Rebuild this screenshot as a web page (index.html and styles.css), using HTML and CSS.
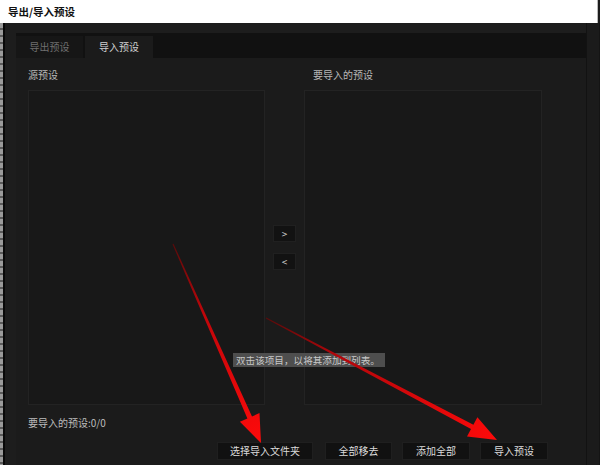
FILE: index.html
```html
<!DOCTYPE html>
<html>
<head>
<meta charset="utf-8">
<link rel="stylesheet" href="styles.css">
</head>
<body>
<div class="screen">
  <div class="titlebar">导出/导入预设</div>
  <div class="main">
    <div class="edge"></div>
    <div class="body">
      <div class="tabs">
        <div class="tab">导出预设</div>
        <div class="tab active">导入预设</div>
      </div>
      <div class="panel">
        <div class="lists">
          <div class="label">源预设</div>
          <div></div>
          <div class="label">要导入的预设</div>
          <div class="listbox"></div>
          <div class="movers">
            <div class="mbtn">&gt;</div>
            <div class="mbtn">&lt;</div>
          </div>
          <div class="listbox"></div>
        </div>
        <div class="count">要导入的预设:0/0</div>
        <div class="actions">
          <div class="btn wide">选择导入文件夹</div>
          <div class="btn narrow">全部移去</div>
          <div class="btn">添加全部</div>
          <div class="btn">导入预设</div>
        </div>
      </div>
    </div>
    <div class="redge"></div>
  </div>
  <div class="tooltip">双击该项目，以将其添加到列表。</div>
  <svg class="annot" width="600" height="465" viewBox="0 0 600 465">
    <defs>
      <linearGradient id="g1" gradientUnits="userSpaceOnUse" x1="173" y1="244" x2="261" y2="443">
        <stop offset="0" stop-color="#5a0a0a"/>
        <stop offset="0.35" stop-color="#c0060a"/>
        <stop offset="1" stop-color="#ff0a0a"/>
      </linearGradient>
      <linearGradient id="g2" gradientUnits="userSpaceOnUse" x1="266" y1="318" x2="497" y2="440">
        <stop offset="0" stop-color="#5a0a0a"/>
        <stop offset="0.3" stop-color="#b0060a"/>
        <stop offset="1" stop-color="#ff0a0a"/>
      </linearGradient>
    </defs>
    <polygon fill="url(#g1)" points="173.5,243.8 252.0,416.4 259.5,413.1 261,443 239.9,421.7 247.4,418.4 172.5,244.2"/>
    <polygon fill="url(#g2)" points="266.2,317.6 473.4,424.7 477.4,417.2 497,440 467.0,436.6 471.0,429.1 265.8,318.4"/>
  </svg>
</div>
</body>
</html>
```

FILE: styles.css
```css
* { box-sizing: border-box; }
html, body { margin: 0; padding: 0; background: #1c1c1c; }
body {
  width: 600px;
  height: 465px;
  overflow: hidden;
  font-family: "Noto Sans CJK SC", "Noto Sans", sans-serif;
  font-size: 10px;
}
.screen {
  position: relative;
  width: 600px;
  height: 465px;
  display: flex;
  flex-direction: column;
  background: #1c1c1c;
}
.titlebar {
  height: 23px;
  width: 598px;
  background: #ffffff;
  color: #111;
  font-weight: bold;
  font-size: 10.5px;
  line-height: 23px;
  padding-left: 8px;
  border-right: 1px solid #bbb;
}
.main {
  flex: 1;
  display: flex;
}
.edge {
  width: 5px;
  border-right: 2px solid #080808;
  background: repeating-linear-gradient(to bottom, #9a9a9a 0 5px, #5a5a5a 5px 7px);
}
.body {
  width: 581px;
  padding: 10px 0 0 11px;
  background: #1d1d1d;
  display: flex;
  flex-direction: column;
}
.redge {
  width: 14px;
  border-left: 1px solid #121212;
  border-right: 1px solid #141414;
  background: #1b1b1b;
}
.tabs {
  width: 570px;
  height: 25px;
  background: #111111;
  display: flex;
  align-items: flex-end;
  gap: 2px;
}
.tab {
  width: 67px;
  height: 22px;
  line-height: 22px;
  text-align: center;
  color: #6f6f6f;
  background: #161616;
}
.tab.active {
  width: 68px;
  color: #d0d0d0;
  background: #1b1b1b;
}
.panel {
  width: 570px;
  flex: 1;
  background: #1b1b1b;
  padding: 10px 38px 0 12px;
}
.lists {
  display: grid;
  grid-template-columns: 237px 39px 238px;
  grid-template-rows: 14px 315px;
  row-gap: 8px;
}
.label {
  color: #b8b8b8;
  line-height: 14px;
}
.lists .label:nth-child(3) { padding-left: 9px; }
.listbox {
  background: #181818;
  border: 1px solid #232323;
}
.movers {
  display: flex;
  flex-direction: column;
  align-items: center;
  justify-content: center;
  gap: 11px;
}
.mbtn {
  width: 23px;
  height: 17px;
  line-height: 15px;
  text-align: center;
  color: #cfcfcf;
  background: #121212;
  border: 1px solid #202020;
}
.count {
  margin-top: 11px;
  line-height: 14px;
  color: #bdbdbd;
}
.actions {
  margin-top: 12px;
  display: flex;
  justify-content: flex-end;
  gap: 10px;
}
.btn {
  width: 68px;
  height: 18px;
  line-height: 16px;
  text-align: center;
  color: #dcdcdc;
  background: #111111;
  border: 1px solid #1f1f1f;
}
.btn.wide { width: 96px; margin-right: 2px; }
.btn.narrow { width: 67px; }
.tooltip {
  position: absolute;
  left: 233px;
  top: 353px;
  width: 152px;
  height: 14px;
  line-height: 14px;
  padding-left: 3px;
  background: #4e4e4e;
  color: #c8c8c8;
  font-size: 9.6px;
  white-space: nowrap;
  overflow: hidden;
}
.annot {
  position: absolute;
  left: 0;
  top: 0;
  pointer-events: none;
}
```
